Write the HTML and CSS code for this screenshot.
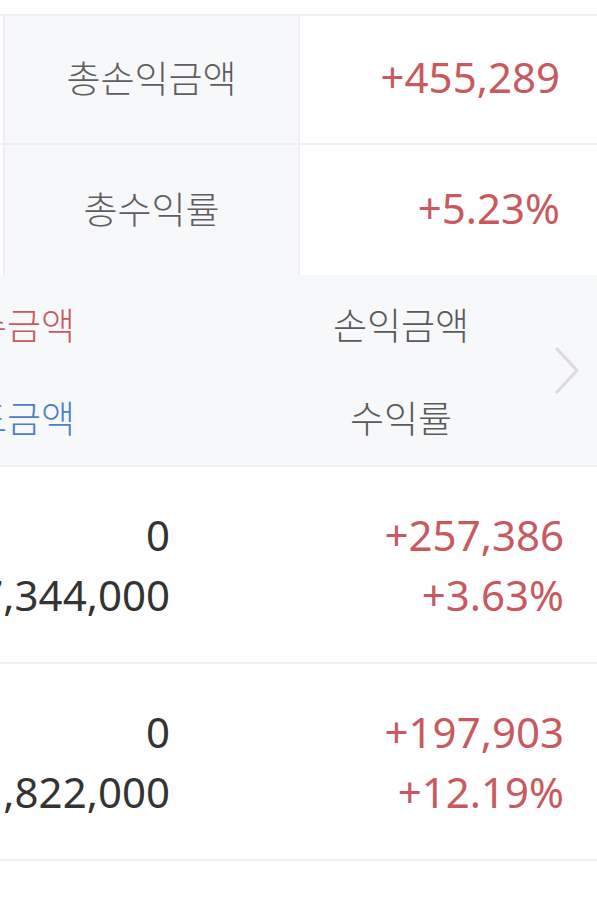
FILE: index.html
```html
<!DOCTYPE html>
<html lang="ko">
<head>
<meta charset="utf-8">
<title>수익률</title>
<link rel="stylesheet" href="styles.css">
</head>
<body>
<div class="screen">
  <div class="topgap"></div>
  <div class="summary">
    <div class="srow srow-first">
      <div class="edge"></div>
      <div class="slabel">총손익금액</div>
      <div class="svalue up">+455,289</div>
    </div>
    <div class="srow srow-second">
      <div class="edge"></div>
      <div class="slabel">총수익률</div>
      <div class="svalue up">+5.23%</div>
    </div>
  </div>
  <div class="grid">
    <div class="ghead">
      <div class="cols">
        <div class="col col-center">
          <div class="hline up">매수금액</div>
          <div class="hline down">매도금액</div>
        </div>
        <div class="col col-center">
          <div class="hline">손익금액</div>
          <div class="hline">수익률</div>
        </div>
      </div>
      <svg class="chevron" width="26" height="47" viewBox="0 0 26 47" aria-hidden="true">
        <polyline points="3,2 23,23.5 3,45" fill="none" stroke="#dcdcdf" stroke-width="3.2" stroke-linecap="round" stroke-linejoin="round"/>
      </svg>
    </div>
    <div class="grow">
      <div class="cols">
        <div class="col col-right">
          <div class="dline">0</div>
          <div class="dline">7,344,000</div>
        </div>
        <div class="col col-right">
          <div class="dline up">+257,386</div>
          <div class="dline up">+3.63%</div>
        </div>
      </div>
    </div>
    <div class="grow">
      <div class="cols">
        <div class="col col-right">
          <div class="dline">0</div>
          <div class="dline">1,822,000</div>
        </div>
        <div class="col col-right">
          <div class="dline up">+197,903</div>
          <div class="dline up">+12.19%</div>
        </div>
      </div>
    </div>
  </div>
</div>
</body>
</html>
```

FILE: styles.css
```css
* { box-sizing: border-box; }

html, body {
  margin: 0;
  padding: 0;
  background: #ffffff;
}

body {
  font-family: "Noto Sans", "Noto Sans CJK KR", sans-serif;
  color: #333333;
}

.screen {
  width: 597px;
  height: 909px;
  overflow: hidden;
  background: #ffffff;
}

.topgap { height: 14px; }

.summary {
  border-top: 2px solid #eef0f3;
}

.srow {
  display: flex;
  border-bottom: 2px solid #eef0f3;
}
.srow-first { height: 129px; }
.srow-second { height: 130px; border-bottom: none; }

.edge {
  width: 5px;
  flex: none;
  background: #ffffff;
  border-right: 2px solid #eceef1;
}

.slabel {
  width: 295px;
  flex: none;
  background: #f7f8fa;
  border-right: 2px solid #eef0f3;
  display: flex;
  align-items: center;
  justify-content: center;
  padding-bottom: 5px;
  font-family: "Noto Sans CJK KR", sans-serif;
  font-size: 37px;
  font-weight: 300;
  color: #5e5e60;
}

.svalue {
  flex: 1;
  display: flex;
  align-items: center;
  justify-content: flex-end;
  padding-right: 37px;
  padding-bottom: 6px;
  font-size: 42px;
}

.up { color: #c85a5f; }
.down { color: #4e7ecb; }

.grid {
  overflow: hidden;
}

.ghead {
  position: relative;
  height: 192px;
  padding-top: 3px;
  background: #f7f8fa;
  border-bottom: 2px solid #eef0f3;
}

.cols {
  display: flex;
  margin-left: -190px;
}

.col {
  width: 394px;
  flex: none;
  padding: 0 34px;
}
.col-center { text-align: center; }
.col-right { text-align: right; }

.hline {
  height: 93px;
  line-height: 93px;
  font-family: "Noto Sans CJK KR", sans-serif;
  font-size: 37px;
  font-weight: 300;
  color: #5a5a5c;
}
.hline.up { color: #c85a5f; }
.hline.down { color: #4e7ecb; }

.chevron {
  position: absolute;
  right: 17px;
  top: 72px;
}

.grow {
  height: 197px;
  padding-top: 38px;
  border-bottom: 2px solid #eef0f3;
}

.dline {
  height: 60px;
  line-height: 60px;
  font-size: 42px;
  white-space: nowrap;
  color: #333333;
}
.dline.up { color: #c85a5f; }
```
